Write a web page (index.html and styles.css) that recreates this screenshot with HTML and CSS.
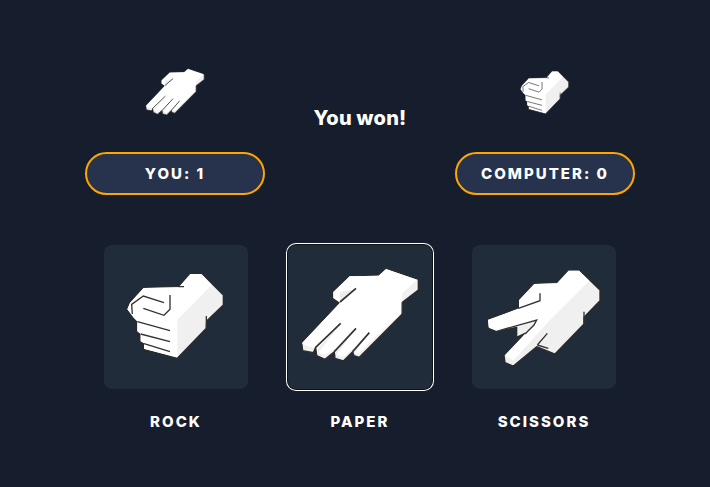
FILE: index.html
```html
<!DOCTYPE html>
<html lang="en">
<head>
    <meta charset="UTF-8">
    <meta name="viewport" content="width=device-width, initial-scale=1.0">
    <title>Rock Paper Scissors</title>
    <link rel="stylesheet" href="styles.css">
</head>
<body>
    <!-- Hand icons, reused at both sizes -->
    <svg class="sprite" xmlns="http://www.w3.org/2000/svg">
        <symbol id="hand-rock" viewBox="42 15 432 432">
            <path class="side" d="M300 100 L335 100 L400 165 L400 195 L350 243 L349 265 L262 355 L250 352 L160 328 L160 310 L150 305 L150 282 L140 275 L140 245 L130 235 L110 208 L118 188 L160 142 L265 140 Z"/>
            <path class="face" d="M302 102 L334 102 L365 135 L262 240 L262 352 L162 326 L162 310 L152 304 L152 282 L142 274 L142 244 L132 234 L112 208 L120 189 L161 144 L267 142 Z"/>
            <path class="line" d="M127 222 L125 193 L160 168 L222 188 M240 165 L240 208 L222 226 L160 205 M142 245 L240 272 M152 282 L240 305 M162 311 L240 335 M265 140 L282 140 M349 228 L349 265"/>
        </symbol>
        <symbol id="hand-paper" viewBox="24 15 432 432">
            <path class="side" d="M318 85 L415 118 L415 150 L367 187 L367 222 L238 352 L222 347 L218 335 L190 363 L165 355 L163 335 L135 358 L110 347 L107 322 L100 338 L68 332 L65 308 L178 188 L158 175 L158 155 L208 107 L295 105 Z"/>
            <path class="face" d="M318 87 L411 119 L367 160 L365 218 L236 340 L224 336 L220 325 L190 350 L167 342 L165 325 L135 345 L112 335 L108 315 L100 324 L68 312 L67 308 L180 188 L160 174 L160 156 L209 109 L296 107 Z"/>
            <path class="shade" d="M180 157 L226 146 L180 186 Z M113 328 L178 256 L113 340 Z M168 332 L224 270 L168 346 Z M222 330 L264 284 L222 342 Z"/>
            <path class="line gap" d="M180 186 L228 145 M107 322 L182 250 M163 335 L228 265 M218 335 L268 278 M367 187 L367 222"/>
        </symbol>
        <symbol id="hand-scissors" viewBox="36 15 432 432">
            <path class="side" d="M325 90 L358 90 L420 150 L420 182 L372 232 L372 252 L285 342 L230 320 L160 378 L135 368 L132 345 L195 280 L170 292 L170 262 L110 275 L85 265 L82 238 L175 205 L175 180 L222 130 L290 128 Z"/>
            <path class="face" d="M326 92 L357 92 L388 122 L264 246 L160 362 L136 346 L222 252 L230 240 L110 272 L86 262 L84 240 L177 205 L177 181 L223 132 L292 130 Z"/>
            <path class="line" d="M240 160 L240 182 L175 205 M110 274 L230 240 L222 255 L195 282 M262 280 L232 315 M232 315 L265 325 M372 215 L372 252"/>
        </symbol>
    </svg>

    <main class="game">
        <section class="scoreboard">
            <div class="player">
                <svg class="hand-small"><use href="#hand-paper"/></svg>
                <div class="score">YOU: 1</div>
            </div>
            <p class="message">You won!</p>
            <div class="player">
                <svg class="hand-small"><use href="#hand-rock"/></svg>
                <div class="score">COMPUTER: 0</div>
            </div>
        </section>

        <section class="choices">
            <div class="choice">
                <button class="card" type="button"><svg class="hand-big"><use href="#hand-rock"/></svg></button>
                <span class="label">ROCK</span>
            </div>
            <div class="choice">
                <button class="card selected" type="button"><svg class="hand-big"><use href="#hand-paper"/></svg></button>
                <span class="label">PAPER</span>
            </div>
            <div class="choice">
                <button class="card" type="button"><svg class="hand-big"><use href="#hand-scissors"/></svg></button>
                <span class="label">SCISSORS</span>
            </div>
        </section>
    </main>
</body>
</html>
```

FILE: styles.css
```css
body {
    margin: 0;
    height: 487px;
    overflow: hidden;
    background: #161d2c;
    color: #fff;
    font-family: 'Inter', 'Liberation Sans', sans-serif;
}

.sprite {
    display: none;
}

.game {
    width: 550px;
    margin-left: 85px;
    padding-top: 57px;
}

.scoreboard {
    display: grid;
    grid-template-columns: 180px 1fr 180px;
}

.player {
    display: flex;
    flex-direction: column;
    align-items: center;
}

.hand-small {
    width: 72px;
    height: 72px;
}

.score {
    width: 100%;
    height: 43px;
    margin-top: 23px;
    box-sizing: border-box;
    display: flex;
    justify-content: center;
    align-items: center;
    background: #27334d;
    border: 2px solid #ffa500;
    border-radius: 22px;
    font-size: 15px;
    font-weight: 800;
    letter-spacing: 2px;
}

.message {
    margin: 0 0 16px;
    align-self: center;
    text-align: center;
    font-size: 20px;
    font-weight: 800;
    letter-spacing: 0.2px;
}

.choices {
    display: flex;
    justify-content: center;
    margin-top: 50px;
}

.choice {
    flex: 0 0 184px;
    display: flex;
    flex-direction: column;
    align-items: center;
}

.card {
    width: 144px;
    height: 144px;
    padding: 0;
    border: none;
    border-radius: 8px;
    background: #212c3b;
}

.card.selected {
    box-shadow: 0 0 0 1px #111, 0 0 0 2px #fff;
}

.hand-big {
    display: block;
    width: 144px;
    height: 144px;
}

.label {
    margin-top: 23px;
    font-size: 15px;
    font-weight: 800;
    letter-spacing: 2px;
}

.side {
    fill: #f0f0f0;
    stroke: #2a2a2a;
    stroke-width: 4;
    stroke-linejoin: round;
}

.face {
    fill: #fff;
}

.shade {
    fill: #ececec;
}

.line {
    fill: none;
    stroke: #333;
    stroke-width: 4;
}

.gap {
    stroke-width: 5;
}
```
